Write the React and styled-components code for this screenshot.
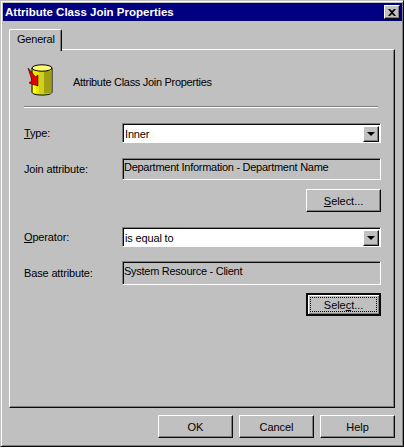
import React from "react";
import styled, { createGlobalStyle, css } from "styled-components";

const GRAY = "#c0c0c0";
const SHADOW = "#808080";
const DARK = "#0a0a0a";

const GlobalStyle = createGlobalStyle`
  html, body {
    margin: 0;
    padding: 0;
    background: #ffffff;
  }
`;

const raised = css`
  border-style: solid;
  border-width: 1px;
  border-color: #ffffff ${DARK} ${DARK} #ffffff;
  box-shadow: inset -1px -1px 0 ${SHADOW};
`;

const sunken = css`
  border-style: solid;
  border-width: 1px;
  border-color: ${SHADOW} #ffffff #ffffff ${SHADOW};
  box-shadow: inset 1px 1px 0 ${DARK};
`;

const Window = styled.div`
  box-sizing: border-box;
  width: 404px;
  height: 447px;
  padding: 2px 1px 1px 2px;
  background: ${GRAY};
  border: 1px solid ${GRAY};
  border-right-color: ${DARK};
  border-bottom-color: ${DARK};
  box-shadow: inset 1px 1px 0 #ffffff, inset -1px -1px 0 ${SHADOW};
  display: flex;
  flex-direction: column;
  font-family: "Liberation Sans", Arial, sans-serif;
  font-size: 11px;
  color: #000000;
`;

const TitleBar = styled.div`
  height: 18px;
  flex: none;
  background: #000080;
  display: flex;
  align-items: center;
  justify-content: space-between;
  padding: 0 2px 0 2px;
`;

const Title = styled.span`
  color: #ffffff;
  font-weight: 700;
  font-size: 11.5px;
`;

const CloseButton = styled.button`
  ${raised};
  box-sizing: border-box;
  width: 16px;
  height: 14px;
  padding: 0;
  background: ${GRAY};
  display: flex;
  align-items: center;
  justify-content: center;
`;

const Content = styled.div`
  flex: 1;
  display: flex;
  flex-direction: column;
  padding: 8px 7px 0 6px;
`;

const TabStrip = styled.div`
  display: flex;
  height: 21px;
  flex: none;
  margin-bottom: -1px;
  position: relative;
  z-index: 1;
`;

const Tab = styled.div`
  box-sizing: border-box;
  width: 53px;
  height: 22px;
  padding-left: 7px;
  line-height: 18px;
  font-size: 11px;
  letter-spacing: -0.2px;
  background: ${GRAY};
  border-style: solid;
  border-width: 1px 1px 0 1px;
  border-color: #ffffff ${DARK} ${GRAY} #ffffff;
  border-top-left-radius: 2px;
  border-top-right-radius: 2px;
  box-shadow: inset -1px 0 0 ${SHADOW};
`;

const Panel = styled.div`
  box-sizing: border-box;
  height: 359px;
  flex: none;
  padding: 12px 13px 0 14px;
  border-style: solid;
  border-width: 1px;
  border-color: #ffffff ${DARK} ${DARK} #ffffff;
  box-shadow: inset -1px -1px 0 ${SHADOW};
`;

const Header = styled.div`
  display: flex;
  align-items: center;
  height: 36px;
`;

const HeaderIcon = styled.svg`
  width: 32px;
  height: 36px;
  flex: none;
  margin-left: 1px;
`;

const HeaderText = styled.span`
  margin-left: 16px;
  margin-top: 3px;
  letter-spacing: -0.3px;
`;

const Separator = styled.div`
  height: 1px;
  margin: 8px 3px 0 0;
  background: ${SHADOW};
  border-bottom: 1px solid #ffffff;
`;

const Row = styled.div`
  display: flex;
  align-items: center;
  margin-top: ${(p) => p.$top}px;
`;

const Label = styled.span`
  width: 98px;
  flex: none;
  letter-spacing: -0.15px;
`;

const Underlined = styled.span`
  text-decoration: underline;
`;

const Select = styled.div`
  ${sunken};
  box-sizing: border-box;
  width: 259px;
  height: 20px;
  background: #ffffff;
  display: flex;
  align-items: center;
  justify-content: space-between;
  padding: 1px 1px 0 2px;
  letter-spacing: -0.15px;
`;

const ArrowButton = styled.div`
  ${raised};
  box-sizing: border-box;
  width: 16px;
  height: 16px;
  background: ${GRAY};
  display: flex;
  align-items: center;
  justify-content: center;
`;

const Arrow = styled.div`
  width: 0;
  height: 0;
  border-left: 4px solid transparent;
  border-right: 4px solid transparent;
  border-top: 4px solid #000000;
`;

const Field = styled.div`
  ${sunken};
  box-sizing: border-box;
  width: 259px;
  height: ${(p) => p.$height}px;
  padding: ${(p) => p.$height / 2 - 9}px 0 0 1px;
  background: ${GRAY};
  letter-spacing: -0.27px;
`;

const ButtonRow = styled.div`
  display: flex;
  justify-content: flex-end;
  margin-top: ${(p) => p.$top}px;
  gap: 6px;
`;

const Button = styled.button`
  ${raised};
  box-sizing: border-box;
  width: 75px;
  height: 23px;
  padding: 0;
  background: ${GRAY};
  color: #000000;
  font-family: inherit;
  font-size: 11px;
  letter-spacing: -0.05px;
  position: relative;
  ${(p) =>
    p.$focused &&
    css`
      border-width: 2px;
      border-color: ${DARK};
      box-shadow: inset 1px 1px 0 #ffffff, inset -1px -1px 0 ${SHADOW};
      &::after {
        content: "";
        position: absolute;
        inset: 2px;
        border: 1px dotted #000000;
      }
    `}
`;

const Footer = styled(ButtonRow)`
  margin-top: 7px;
`;

function DatabaseIcon() {
  return (
    <HeaderIcon viewBox="24 60 32 36">
      <defs>
        <pattern id="dither" width="2" height="2" patternUnits="userSpaceOnUse">
          <rect width="2" height="2" fill="#ffff00" />
          <rect width="1" height="1" fill="#ffffff" />
          <rect x="1" y="1" width="1" height="1" fill="#ffffff" />
        </pattern>
      </defs>
      <path d="M31 66v24c0 2 4 3 10 3s10-1 10-3V66z" fill="#e8e800" stroke="#000000" strokeWidth="1" />
      <rect x="38" y="69" width="5" height="23" fill="#d0d020" />
      <rect x="43" y="69" width="7.500" height="22.500" fill="#a0a010" />
      <rect x="32" y="84" width="3" height="7" fill="url(#dither)" />
      <ellipse cx="41" cy="66" rx="10" ry="3.200" fill="#ffff70" stroke="#000000" strokeWidth="1" />
      <path d="M27 66l7.500 9 2.500-2v11l-9-3 3-2.500z" fill="#ee0000" stroke="#200000" strokeWidth="0.600" />
    </HeaderIcon>
  );
}

export default function App() {
  return (
    <>
      <GlobalStyle />
      <Window>
        <TitleBar>
          <Title>Attribute Class Join Properties</Title>
          <CloseButton aria-label="Close">
            <svg width="8" height="7" viewBox="0 0 8 7">
              <path d="M0 0h2l2 2 2-2h2L5 3.500 8 7H6L4 5 2 7H0l3-3.500z" fill="#000000" />
            </svg>
          </CloseButton>
        </TitleBar>
        <Content>
          <TabStrip>
            <Tab>General</Tab>
          </TabStrip>
          <Panel>
            <Header>
              <DatabaseIcon />
              <HeaderText>Attribute Class Join Properties</HeaderText>
            </Header>
            <Separator />
            <Row $top={15}>
              <Label>
                <Underlined>T</Underlined>ype:
              </Label>
              <Select>
                Inner
                <ArrowButton>
                  <Arrow />
                </ArrowButton>
              </Select>
            </Row>
            <Row $top={15}>
              <Label>Join attribute:</Label>
              <Field $height={22}>Department Information - Department Name</Field>
            </Row>
            <ButtonRow $top={9}>
              <Button>
                <Underlined>S</Underlined>elect...
              </Button>
            </ButtonRow>
            <Row $top={15}>
              <Label>
                <Underlined>O</Underlined>perator:
              </Label>
              <Select>
                is equal to
                <ArrowButton>
                  <Arrow />
                </ArrowButton>
              </Select>
            </Row>
            <Row $top={14}>
              <Label>Base attribute:</Label>
              <Field $height={24}>System Resource - Client</Field>
            </Row>
            <ButtonRow $top={8}>
              <Button $focused>
                Sele<Underlined>c</Underlined>t...
              </Button>
            </ButtonRow>
          </Panel>
          <Footer>
            <Button>OK</Button>
            <Button>Cancel</Button>
            <Button>Help</Button>
          </Footer>
        </Content>
      </Window>
    </>
  );
}
